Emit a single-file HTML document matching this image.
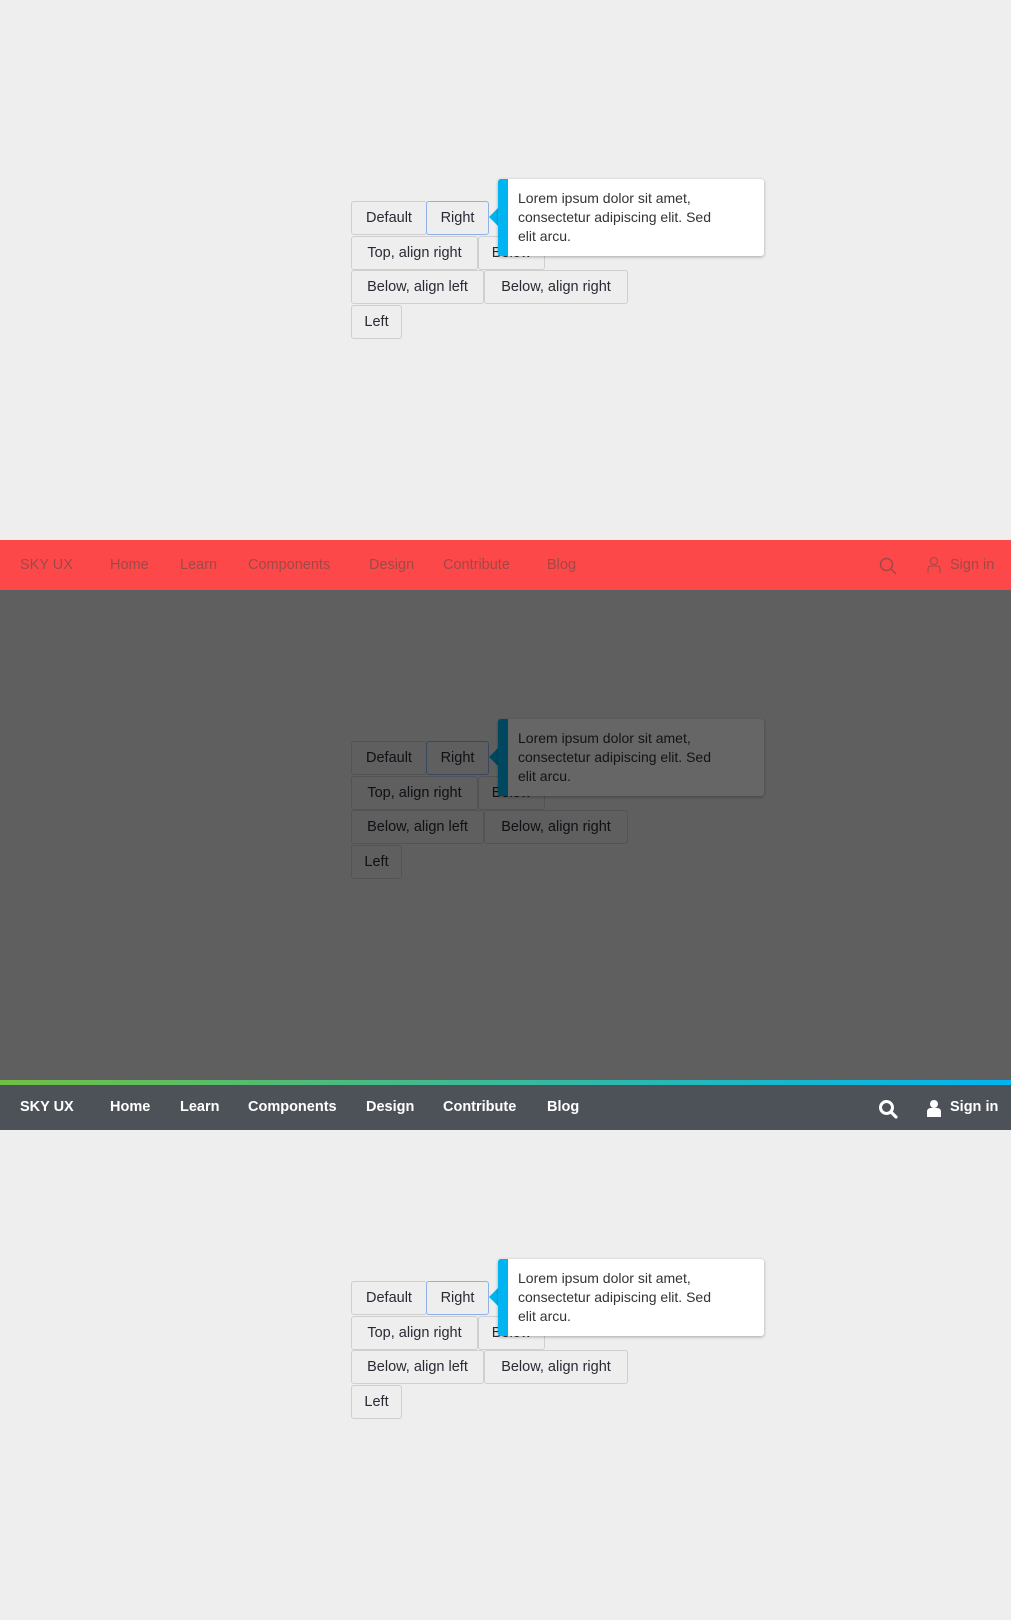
<!DOCTYPE html>
<html><head><meta charset="utf-8"><style>
*{box-sizing:border-box;margin:0;padding:0}
body{width:1011px;height:1620px;background:#eeeeee;font-family:"Liberation Sans",sans-serif;position:relative;overflow:hidden}
.sec{position:absolute;left:0;width:1011px;height:540px}
.b{position:absolute;height:34px;border:1px solid #cfcfcf;border-radius:3px;background:#eeeeee;color:#2a2a35;font-size:14.5px;line-height:32px;text-align:center;white-space:nowrap}
.b.f{border-color:#8fb1e8}
.tip{position:absolute;left:498px;top:179px;width:266px;height:77px;background:#fff;border-radius:3px;box-shadow:0 1px 3px rgba(0,0,0,.3);border-left:10px solid #00b4f1;padding:10px 10px 0 10px;font-size:14px;line-height:19px;color:#333;white-space:nowrap}
.arr{position:absolute;left:489px;top:208px;width:0;height:0;border-top:9px solid transparent;border-bottom:9px solid transparent;border-right:9px solid #00b4f1}
.nav{position:absolute;left:0;width:1011px;height:45px;font-size:14.5px;line-height:45px}
.nav span{position:absolute;top:0}
.ov{position:absolute;left:0;top:50px;width:1011px;height:490px;background:rgba(0,0,0,.6)}
</style></head><body>

<div class="sec" style="top:0">
<div class="b" style="left:351px;top:201px;width:76px">Default</div>
<div class="b f" style="left:426px;top:201px;width:63px">Right</div>
<div class="b" style="left:351px;top:236px;width:127px">Top, align right</div>
<div class="b" style="left:478px;top:236px;width:67px">Below</div>
<div class="b" style="left:351px;top:270px;width:133px">Below, align left</div>
<div class="b" style="left:484px;top:270px;width:144px">Below, align right</div>
<div class="b" style="left:351px;top:305px;width:51px">Left</div>
<div class="arr"></div>
<div class="tip">Lorem ipsum dolor sit amet,<br>consectetur adipiscing elit. Sed<br>elit arcu.</div>
</div>

<div class="sec" style="top:540px">
<div class="b" style="left:351px;top:201px;width:76px">Default</div>
<div class="b f" style="left:426px;top:201px;width:63px">Right</div>
<div class="b" style="left:351px;top:236px;width:127px">Top, align right</div>
<div class="b" style="left:478px;top:236px;width:67px">Below</div>
<div class="b" style="left:351px;top:270px;width:133px">Below, align left</div>
<div class="b" style="left:484px;top:270px;width:144px">Below, align right</div>
<div class="b" style="left:351px;top:305px;width:51px">Left</div>
<div class="arr"></div>
<div class="tip">Lorem ipsum dolor sit amet,<br>consectetur adipiscing elit. Sed<br>elit arcu.</div>
<div class="ov" style="top:50px"></div>
<div class="nav" style="top:0;height:50px;line-height:50px;background:#fc4848;color:#a04848">
<span style="left:20px">SKY UX</span><span style="left:110px">Home</span><span style="left:180px">Learn</span><span style="left:248px">Components</span><span style="left:369px">Design</span><span style="left:443px">Contribute</span><span style="left:547px">Blog</span>
<svg style="position:absolute;left:878px;top:16px" width="20" height="20" viewBox="0 0 20 20"><circle cx="8.5" cy="8.5" r="6" fill="none" stroke="#a04848" stroke-width="1.5"/><line x1="13" y1="13" x2="18" y2="18" stroke="#a04848" stroke-width="1.5"/></svg>
<svg style="position:absolute;left:927px;top:16px" width="14" height="18" viewBox="0 0 14 18"><circle cx="7" cy="5" r="3.5" fill="none" stroke="#a04848"/><path d="M1 17V13Q1 10 4 10H10Q13 10 13 13V17" fill="none" stroke="#a04848"/></svg>
<span style="left:950px">Sign in</span>
</div>
</div>

<div class="sec" style="top:1080px">
<div class="b" style="left:351px;top:201px;width:76px">Default</div>
<div class="b f" style="left:426px;top:201px;width:63px">Right</div>
<div class="b" style="left:351px;top:236px;width:127px">Top, align right</div>
<div class="b" style="left:478px;top:236px;width:67px">Below</div>
<div class="b" style="left:351px;top:270px;width:133px">Below, align left</div>
<div class="b" style="left:484px;top:270px;width:144px">Below, align right</div>
<div class="b" style="left:351px;top:305px;width:51px">Left</div>
<div class="arr"></div>
<div class="tip">Lorem ipsum dolor sit amet,<br>consectetur adipiscing elit. Sed<br>elit arcu.</div>
<div style="position:absolute;left:0;top:0;width:1011px;height:5px;background:linear-gradient(90deg,#71bf44,#00b4f1)"></div>
<div class="nav" style="top:5px;background:#4d5259;color:#fff;font-weight:bold">
<span style="left:20px">SKY UX</span><span style="left:110px">Home</span><span style="left:180px">Learn</span><span style="left:248px">Components</span><span style="left:366px">Design</span><span style="left:443px">Contribute</span><span style="left:547px">Blog</span>
<svg style="position:absolute;left:878px;top:14px" width="20" height="20" viewBox="0 0 20 20"><circle cx="8.5" cy="8.5" r="6" fill="none" stroke="#fff" stroke-width="3"/><line x1="13" y1="13" x2="18" y2="18" stroke="#fff" stroke-width="3.2" stroke-linecap="round"/></svg>
<svg style="position:absolute;left:927px;top:14px" width="14" height="18" viewBox="0 0 14 18"><circle cx="7" cy="5" r="4" fill="#fff"/><path d="M0 18V13Q0 9 4 9H10Q14 9 14 13V18Z" fill="#fff"/></svg>
<span style="left:950px">Sign in</span>
</div>
</div>
</body></html>
